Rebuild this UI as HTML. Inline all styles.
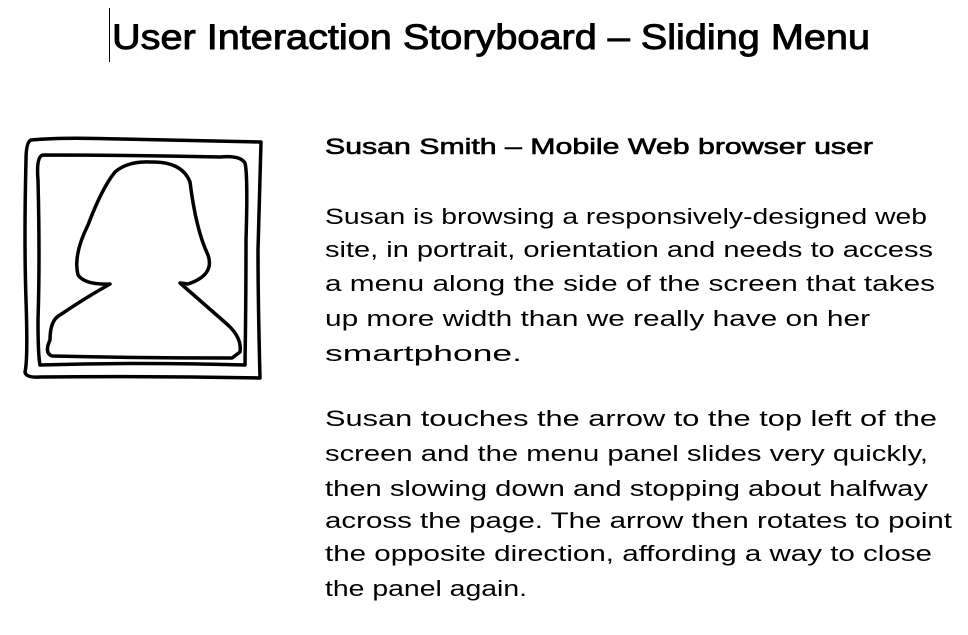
<!DOCTYPE html>
<html><head><meta charset="utf-8"><style>
html,body{margin:0;padding:0;background:#fff;width:968px;height:635px;overflow:hidden}
</style></head><body>
<svg width="968" height="635" viewBox="0 0 968 635" xmlns="http://www.w3.org/2000/svg">
<line x1="109.5" y1="8" x2="109.5" y2="62" stroke="#000" stroke-width="1"/>
<text x="112" y="49" font-family="Liberation Sans, sans-serif" font-size="35" textLength="758" lengthAdjust="spacingAndGlyphs" fill="#000" stroke="#000" stroke-width="0.9">User Interaction Storyboard – Sliding Menu</text>
<g fill="none" stroke="#000" stroke-width="3.5" stroke-linecap="round" stroke-linejoin="round">
<path d="M31 140 Q26 142 26 160 Q24 240 26 300 Q28 360 25 372 Q26 378 40 377 Q150 376 260 378 Q258 300 258 250 Q260 180 261 142 Q200 141 120 139 Q60 137 31 140 Z"/>
<path d="M43 155 Q36 156 38 180 Q40 260 38 320 Q38 355 40 365 Q140 362 245 365 Q246 300 246 240 Q248 175 245 163 Q240 155 220 157 Q130 155 43 155 Z"/>
<path d="M150 162 Q182 161 190 182 Q196 230 208 255 Q215 275 188 284 L180 283 Q205 305 228 325 Q242 338 240 352 L232 358 Q140 358 52 356 Q44 353 50 340 Q50 320 60 315 Q85 298 110 284 Q85 285 78 275 Q73 255 88 225 Q102 188 115 172 Q128 161 150 162 Z"/>
</g>
<g font-family="Liberation Sans, sans-serif" font-size="22" fill="#000">
<text x="325" y="154" textLength="548" lengthAdjust="spacingAndGlyphs" stroke="#000" stroke-width="0.6">Susan Smith – Mobile Web browser user</text>
<text x="325" y="224" textLength="602" lengthAdjust="spacingAndGlyphs">Susan is browsing a responsively-designed web</text>
<text x="325" y="257" textLength="608" lengthAdjust="spacingAndGlyphs">site, in portrait, orientation and needs to access</text>
<text x="325" y="291" textLength="610" lengthAdjust="spacingAndGlyphs">a menu along the side of the screen that takes</text>
<text x="325" y="326" textLength="545" lengthAdjust="spacingAndGlyphs">up more width than we really have on her</text>
<text x="325" y="361" textLength="197" lengthAdjust="spacingAndGlyphs">smartphone.</text>
<text x="325" y="426" textLength="612" lengthAdjust="spacingAndGlyphs">Susan touches the arrow to the top left of the</text>
<text x="325" y="461" textLength="603" lengthAdjust="spacingAndGlyphs">screen and the menu panel slides very quickly,</text>
<text x="325" y="496" textLength="603" lengthAdjust="spacingAndGlyphs">then slowing down and stopping about halfway</text>
<text x="325" y="528" textLength="627" lengthAdjust="spacingAndGlyphs">across the page. The arrow then rotates to point</text>
<text x="325" y="561" textLength="607" lengthAdjust="spacingAndGlyphs">the opposite direction, affording a way to close</text>
<text x="325" y="596" textLength="202" lengthAdjust="spacingAndGlyphs">the panel again.</text>
</g>
</svg>
</body></html>
